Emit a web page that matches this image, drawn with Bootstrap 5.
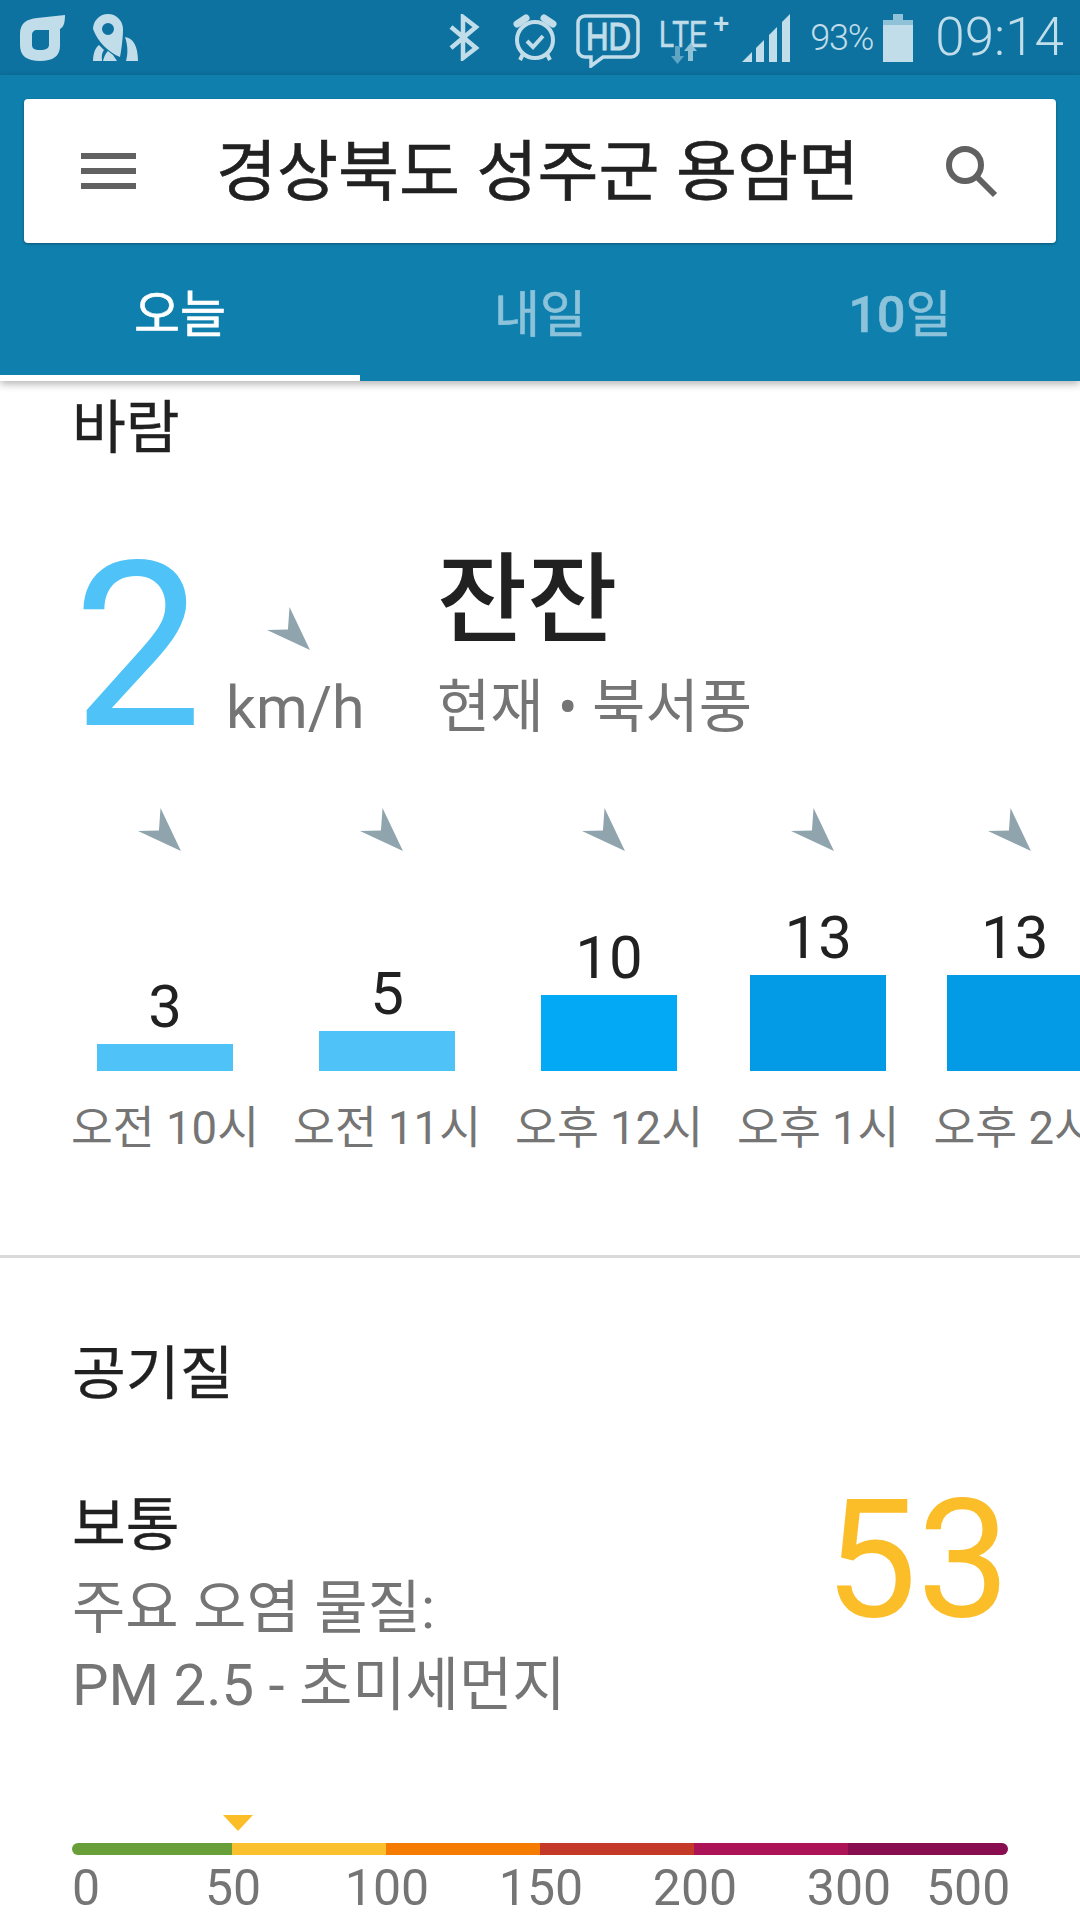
<!DOCTYPE html>
<html lang="ko"><head><meta charset="utf-8">
<link href="https://cdn.jsdelivr.net/npm/bootstrap@5.3.0/dist/css/bootstrap.min.css" rel="stylesheet">
<style>
html,body{margin:0;background:#fff;width:1080px;height:1920px;overflow:hidden}
body{font-family:Roboto,"Noto Sans CJK KR",sans-serif;color:#212121;line-height:1}
svg{display:block;flex:none}
.sbar{height:75px;background:#0d729f;color:#c0dde9;padding:0 16px 0 20px}
.sbar text{font-family:"Liberation Sans",sans-serif;fill:#c0dde9}
.g28{margin-left:28px}.g33{margin-left:33px}.g19{margin-left:19px}.g12{margin-left:12px}.g10{margin-left:10px}
.hdico{margin-top:7px}
.spct{font-size:36px;font-weight:300;margin-left:20px;letter-spacing:-1.2px;width:63px;white-space:nowrap}
.sclock{font-size:53px;font-weight:300;margin-left:22px;white-space:nowrap}
.hdr{background:#0f80ae;height:306px;padding:24px 24px 0;box-shadow:0 3px 8px rgba(0,0,0,.3);position:relative;z-index:2}
.srch{height:144px;background:#fff;border-radius:4px;box-shadow:0 1px 3px rgba(0,0,0,.35);padding:0 58px 0 57px}
.srch-t{font-size:66.3px;font-weight:400;color:#212121;-webkit-text-stroke:.6px #212121;padding:3px 5px 0 0}
.tabbar{height:138px;margin:0 -24px}
.tabi{width:360px;height:138px;font-size:50px;font-weight:400;color:#8cc3da;padding-top:47px;text-align:center;-webkit-text-stroke:.6px currentColor}
.tabi.sel{color:#fff;border-bottom:6px solid #fff}
.tnum{font-weight:500}
.wtitle{font-size:58.5px;padding:18px 0 0 72px;height:84px;-webkit-text-stroke:.3px #212121}
.wnow{height:343px;padding-left:73px}
.big2{font-size:230px;font-weight:400;color:#4fc3f7;width:153px;margin-top:67px}
.kcol{width:211px;padding-top:142px}
.karrow{margin-left:41px;margin-bottom:27px}
.kmh{font-size:59px;color:#757575}
.rcol{padding-top:87px}
.calm{font-size:98px;font-weight:500;color:#212121}
.calm2{font-size:58px;color:#757575;margin-top:28px;white-space:nowrap}
.hrow{height:447px;padding-left:71px;gap:34px;overflow:hidden}
.hcol{flex:none}
.harrow{margin-right:10px}
.hchart{height:219px}
.hnum{font-size:60px;color:#212121;margin-bottom:7px}
.hbar{width:136px}
.hlab{font-size:45.5px;color:#757575;white-space:nowrap;margin-top:35px}
.divi{border-top:3px solid #dadada;height:0;margin-bottom:87px}
.aqt{font-size:58.5px;padding-left:72px;height:151px;-webkit-text-stroke:.3px #212121}
.aqblock{padding:0 70px 0 72px;height:319px}
.aqv{font-size:58.5px;color:#212121;-webkit-text-stroke:.3px #212121;height:77px}
.aqs{font-size:58px;color:#757575;line-height:77px;white-space:nowrap;margin-top:-3px}
.aqn{font-size:165px;font-weight:400;color:#fbbd28;margin-top:-19px}
.tri{width:0;height:0;border-left:15px solid transparent;border-right:15px solid transparent;border-top:16px solid #fbbd28;margin-left:223px}
.sclbar{height:12px;border-radius:6px;overflow:hidden;margin:12px 72px 8px}
.sclbar span{display:block;height:100%}
.sclab{font-size:50px;color:#757575;padding-left:72px}
.sclab span{width:154px;text-align:center;flex:none}
.sclab .tfirst{width:84px;text-align:left}
.sclab .tlast{width:81px;text-align:right}
</style></head><body>
<div class="sbar d-flex align-items-center">
<svg width="45" height="46" viewBox="0 0 45 46"><path fill-rule="evenodd" d="M0 19C0 8 7 4 17 3L45 0C45 7 44 12 40 14V31C40 41 33 46 20 46C7 46 0 41 0 30ZM12 20V30C12 33 14 35 20 35C26 35 29 33 29 30V15H17C14 15 12 17 12 20Z" fill="#c0dde9"/></svg>
<svg class="g28" width="45" height="47" viewBox="0 0 45 47" fill="#c0dde9"><path fill-rule="evenodd" d="M0 15A15 15 0 1 1 30 15C30 22 29 32 27 43C15 38 5 28 0 15ZM9 15A6 6 0 1 0 21 15A6 6 0 1 0 9 15Z"/><path d="M32 23C40 24 45 32 45 47H33C35 40 35 32 32 23ZM0 47C0 40 2 34 6 31L11 36C8 40 9 44 9 47ZM15 37L20 41 24 47H10C11 43 12 40 15 37Z"/></svg>
<span class="flex-grow-1"></span>
<svg width="32" height="47" viewBox="0 0 32 47"><path d="M3 13L28 34 15 44V3L28 13 3 34" fill="none" stroke="#c0dde9" stroke-width="4.5"/></svg>
<svg class="g33" width="44" height="47" viewBox="0 0 44 47"><circle cx="22" cy="26" r="18" fill="none" stroke="#c0dde9" stroke-width="4"/><path d="M14 27L20 33 30 22" fill="none" stroke="#c0dde9" stroke-width="4"/><path d="M4 10L13 4M40 10L31 4" fill="none" stroke="#c0dde9" stroke-width="7" stroke-linecap="round"/><path d="M10 40L7 46M34 40L37 46" fill="none" stroke="#c0dde9" stroke-width="4"/></svg>
<svg class="g19 hdico" width="64" height="54" viewBox="0 0 64 54"><path d="M9 2H55A7 7 0 0 1 62 9V35A7 7 0 0 1 55 43H27L15 52V43H9A7 7 0 0 1 2 35V9A7 7 0 0 1 9 2Z" fill="none" stroke="#c0dde9" stroke-width="3.5"/><text x="10" y="36" font-size="38" textLength="45" lengthAdjust="spacingAndGlyphs" stroke="#c0dde9" stroke-width="1.2">HD</text></svg>
<svg class="g19" width="71" height="63" viewBox="0 -10 71 63"><text transform="translate(0 31) scale(.74 1)" font-size="37" stroke="#c0dde9" stroke-width=".6">LTE</text><text x="54" y="17" font-size="28" font-weight="700">+</text><path d="M16 30H21V40H25L18.5 48 12 40H16Z" fill="#5fa5c3"/><path d="M29 45V35H25L31.5 27 38 35H34V45Z" fill="#8fc1d7"/></svg>
<svg class="g12" width="48" height="48" viewBox="0 0 48 48" fill="#c0dde9"><path d="M0 48L10 38V48ZM14 48V34L22 26V48ZM27 48V21L35 13V48ZM40 48V8L48 0V48Z"/></svg>
<span class="spct">93%</span>
<svg class="g10" width="30" height="48" viewBox="0 0 30 48"><path d="M10 0H20V6H10Z" fill="#8fc1d7"/><path d="M0 6H30V11H0Z" fill="#8fc1d7"/><path d="M0 11H30V48H0Z" fill="#c0dde9"/></svg>
<span class="sclock">09:14</span>
</div>
<div class="hdr">
<div class="srch d-flex align-items-center justify-content-between">
<svg width="55" height="36" viewBox="0 0 55 36"><path d="M0 0h55v6H0zM0 15h55v6H0zM0 30h55v6H0z" fill="#616161"/></svg>
<span class="srch-t">경상북도 성주군 용암면</span>
<svg width="54" height="54" viewBox="0 0 54 54"><circle cx="21" cy="21" r="16" fill="none" stroke="#616161" stroke-width="6"/><path d="M33 33L51 51" stroke="#616161" stroke-width="6"/></svg>
</div>
<div class="tabbar d-flex">
<div class="tabi sel">오늘</div><div class="tabi">내일</div><div class="tabi"><span class="tnum">10</span>일</div>
</div>
</div>
<div class="wtitle">바람</div>
<div class="wnow d-flex">
<div class="big2">2</div>
<div class="kcol">
<svg class="karrow" width="44" height="44" viewBox="0 0 42 42"><path d="M21.5 0L41 41 0 22 20 21.5Z" fill="#90a4ae"/></svg>
<div class="kmh">km/h</div>
</div>
<div class="rcol">
<div class="calm">잔잔</div>
<div class="calm2">현재 • 북서풍</div>
</div>
</div>
<div class="hrow d-flex">
<div class="hcol d-flex flex-column align-items-center">
<svg class="harrow" width="44" height="44" viewBox="0 0 42 42"><path d="M21.5 0L41 41 0 22 20 21.5Z" fill="#90a4ae"/></svg>
<div class="hchart d-flex flex-column justify-content-end align-items-center"><div class="hnum">3</div><div class="hbar" style="height:27px;background:#4fc3f7"></div></div>
<div class="hlab">오전 10시</div></div>
<div class="hcol d-flex flex-column align-items-center">
<svg class="harrow" width="44" height="44" viewBox="0 0 42 42"><path d="M21.5 0L41 41 0 22 20 21.5Z" fill="#90a4ae"/></svg>
<div class="hchart d-flex flex-column justify-content-end align-items-center"><div class="hnum">5</div><div class="hbar" style="height:40px;background:#4fc3f7"></div></div>
<div class="hlab">오전 11시</div></div>
<div class="hcol d-flex flex-column align-items-center">
<svg class="harrow" width="44" height="44" viewBox="0 0 42 42"><path d="M21.5 0L41 41 0 22 20 21.5Z" fill="#90a4ae"/></svg>
<div class="hchart d-flex flex-column justify-content-end align-items-center"><div class="hnum">10</div><div class="hbar" style="height:76px;background:#03a9f4"></div></div>
<div class="hlab">오후 12시</div></div>
<div class="hcol d-flex flex-column align-items-center">
<svg class="harrow" width="44" height="44" viewBox="0 0 42 42"><path d="M21.5 0L41 41 0 22 20 21.5Z" fill="#90a4ae"/></svg>
<div class="hchart d-flex flex-column justify-content-end align-items-center"><div class="hnum">13</div><div class="hbar" style="height:96px;background:#039be5"></div></div>
<div class="hlab">오후 1시</div></div>
<div class="hcol d-flex flex-column align-items-center">
<svg class="harrow" width="44" height="44" viewBox="0 0 42 42"><path d="M21.5 0L41 41 0 22 20 21.5Z" fill="#90a4ae"/></svg>
<div class="hchart d-flex flex-column justify-content-end align-items-center"><div class="hnum">13</div><div class="hbar" style="height:96px;background:#039be5"></div></div>
<div class="hlab">오후 2시</div></div>
</div>
<div class="divi"></div>
<div class="aqt">공기질</div>
<div class="aqblock d-flex justify-content-between">
<div><div class="aqv">보통</div><div class="aqs">주요 오염 물질:<br>PM 2.5 - 초미세먼지</div></div>
<div class="aqn">53</div>
</div>
<div class="tri"></div>
<div class="sclbar d-flex">
<span style="width:160px;background:#689f38"></span><span style="width:154px;background:#fbc02d"></span><span style="width:154px;background:#f57c00"></span><span style="width:154px;background:#c53929"></span><span style="width:154px;background:#ad1457"></span><span style="width:160px;background:#880e4f"></span>
</div>
<div class="sclab d-flex"><span class="tfirst">0</span><span>50</span><span>100</span><span>150</span><span>200</span><span>300</span><span class="tlast">500</span></div>
</body></html>
